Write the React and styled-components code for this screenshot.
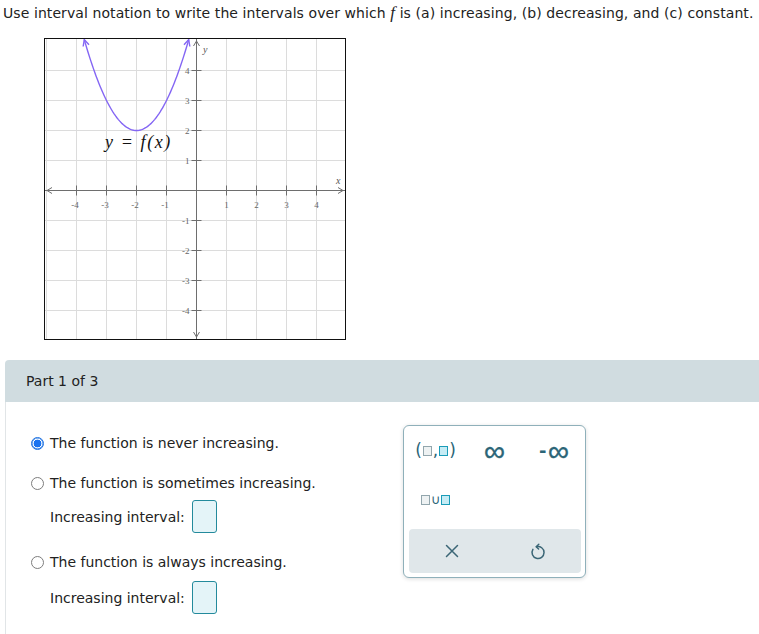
import React from "react"
import styled, { createGlobalStyle } from "styled-components"

const GlobalStyle = createGlobalStyle`
  body {
    margin: 0;
    background: #fff;
    font-family: "DejaVu Sans", Verdana, sans-serif;
    font-size: 14px;
    color: #222;
  }
`

// graph constants: 30px per unit, origin near the middle of a 300px box
const U = 30
const X0 = 151.5
const Y0 = 151.5
const px = (x) => X0 + x * U
const py = (y) => Y0 - y * U

const f = (x) => (x + 2) * (x + 2) + 2

const curvePoints = () => {
  const pts = []
  const a = -2 - Math.sqrt(3.03)
  const b = -2 + Math.sqrt(3.03)
  for (let i = 0; i <= 80; i++) {
    const x = a + ((b - a) * i) / 80
    pts.push([px(x), py(f(x))])
  }
  return pts
}

const arrowHead = (tip, from, size = 7) => {
  const dx = tip[0] - from[0]
  const dy = tip[1] - from[1]
  const len = Math.hypot(dx, dy)
  const ux = dx / len
  const uy = dy / len
  const a = 0.45
  const l = [tip[0] - size * (ux * Math.cos(a) - uy * Math.sin(a)), tip[1] - size * (uy * Math.cos(a) + ux * Math.sin(a))]
  const r = [tip[0] - size * (ux * Math.cos(-a) - uy * Math.sin(-a)), tip[1] - size * (uy * Math.cos(-a) + ux * Math.sin(-a))]
  return `M${l[0]} ${l[1]} L${tip[0]} ${tip[1]} L${r[0]} ${r[1]}`
}

const Graph = () => {
  const grid = [-5, -4, -3, -2, -1, 1, 2, 3, 4]
  const ticks = [-4, -3, -2, -1, 1, 2, 3, 4]
  const pts = curvePoints()
  const d = "M" + pts.map((p) => `${p[0].toFixed(2)} ${p[1].toFixed(2)}`).join(" L")
  return (
    <GraphBox width="300" height="300" viewBox="0 0 300 300">
      {grid.map((k) => (
        <line key={"v" + k} x1={px(k)} y1="0" x2={px(k)} y2="300" stroke="#dcdcdc" />
      ))}
      {grid.map((k) => (
        <line key={"h" + k} x1="0" y1={py(k)} x2="300" y2={py(k)} stroke="#dcdcdc" />
      ))}
      <line x1="0" y1={Y0} x2="300" y2={Y0} stroke="#6e6e6e" />
      <line x1={X0} y1="0" x2={X0} y2="300" stroke="#6e6e6e" />
      <path d={`M7 ${Y0 - 3} L2 ${Y0} L7 ${Y0 + 3}`} fill="none" stroke="#6e6e6e" />
      <path d={`M293 ${Y0 - 3} L298 ${Y0} L293 ${Y0 + 3}`} fill="none" stroke="#6e6e6e" />
      <path d={`M${X0 - 3} 7 L${X0} 2 L${X0 + 3} 7`} fill="none" stroke="#6e6e6e" />
      <path d={`M${X0 - 3} 293 L${X0} 298 L${X0 + 3} 293`} fill="none" stroke="#6e6e6e" />
      {ticks.map((k) => (
        <g key={"t" + k}>
          <line x1={px(k)} y1={Y0 - 5} x2={px(k)} y2={Y0 + 5} stroke="#6e6e6e" />
          <line x1={X0 - 5} y1={py(k)} x2={X0 + 5} y2={py(k)} stroke="#6e6e6e" />
          <TickText x={px(k) - (k < 0 ? 1.5 : 0)} y={Y0 + 17} textAnchor="middle">
            {k}
          </TickText>
          <TickText x={X0 - 7} y={py(k) + 3} textAnchor="end">
            {k}
          </TickText>
        </g>
      ))}
      <AxisText x="291" y="145">x</AxisText>
      <AxisText x="158" y="14">y</AxisText>
      <path d={d} fill="none" stroke="#8466f4" strokeWidth="1.4" />
      <path d={arrowHead(pts[0], pts[3])} fill="none" stroke="#8466f4" strokeWidth="1.4" />
      <path d={arrowHead(pts[pts.length - 1], pts[pts.length - 4])} fill="none" stroke="#8466f4" strokeWidth="1.4" />
      <FuncLabel x="60" y="109">
        y = f(x)
      </FuncLabel>
    </GraphBox>
  )
}

const Radio = ({ checked }) => <RadioDot $checked={checked} />

const Blank = ({ active }) => <Square $active={active} />

const XIcon = () => (
  <svg width="14" height="14" viewBox="0 0 14 14">
    <path d="M1.5 1.5 L12.5 12.5 M12.5 1.5 L1.5 12.5" stroke="#3b6676" strokeWidth="1.5" strokeLinecap="round" />
  </svg>
)

const UndoIcon = () => (
  <svg width="16" height="18" viewBox="0 0 16 18">
    <path d="M6.5 4.7 A6 6 0 1 1 2.9 7.4" fill="none" stroke="#3b6676" strokeWidth="1.5" strokeLinecap="round" />
    <path d="M8.8 2.2 L6.2 4.7 L8.6 7" fill="none" stroke="#3b6676" strokeWidth="1.5" strokeLinecap="round" strokeLinejoin="round" />
  </svg>
)

const App = () => {
  return (
    <Page>
      <GlobalStyle />
      <Question>
        Use interval notation to write the intervals over which <MathF>f</MathF> is (a) increasing, (b)
        decreasing, and (c) constant.
      </Question>
      <GraphWrap>
        <Graph />
      </GraphWrap>

      <Part>
        <PartHeader>Part 1 of 3</PartHeader>
        <PartBody>
          <Options>
            <Choice>
              <Radio checked />
              The function is never increasing.
            </Choice>
            <Choice $gap={20}>
              <Radio />
              The function is sometimes increasing.
            </Choice>
            <Interval $gap={7}>
              Increasing interval:
              <AnswerBox />
            </Interval>
            <Choice $gap={19}>
              <Radio />
              The function is always increasing.
            </Choice>
            <Interval $gap={9}>
              Increasing interval:
              <AnswerBox />
            </Interval>
          </Options>

          <Keypad>
            <KeyGrid>
              <Key>
                <Paren>(</Paren>
                <Blank />
                <Paren>,</Paren>
                <Blank active />
                <Paren>)</Paren>
              </Key>
              <Key>
                <Inf>∞</Inf>
              </Key>
              <Key>
                <Minus>-</Minus>
                <Inf>∞</Inf>
              </Key>
              <Key>
                <Blank />
                <Union>∪</Union>
                <Blank active />
              </Key>
            </KeyGrid>
            <ActionBar>
              <Action>
                <XIcon />
              </Action>
              <Action>
                <UndoIcon />
              </Action>
            </ActionBar>
          </Keypad>
        </PartBody>
      </Part>
    </Page>
  )
}

const Page = styled.div`
  width: 759px;
  min-height: 634px;
  overflow: hidden;
`

const Question = styled.p`
  margin: 0;
  padding: 4px 0 0 3px;
  line-height: 17px;
  white-space: nowrap;
  letter-spacing: 0.08px;
`

const MathF = styled.span`
  font-family: "Liberation Serif", "Times New Roman", serif;
  font-style: italic;
  font-size: 17px;
`

const GraphWrap = styled.div`
  margin: 16px 0 0 44px;
  height: 302px;
`

const GraphBox = styled.svg`
  display: block;
  border: 1px solid #111;
  background: #fff;
`

const TickText = styled.text`
  font-family: "Liberation Serif", "Times New Roman", serif;
  font-size: 9px;
  fill: #666;
`

const AxisText = styled.text`
  font-family: "Liberation Serif", "Times New Roman", serif;
  font-style: italic;
  font-size: 10px;
  fill: #555;
`

const FuncLabel = styled.text`
  font-family: "Liberation Serif", "Times New Roman", serif;
  font-style: italic;
  font-size: 18px;
  letter-spacing: 1.6px;
  fill: #111;
`

const Part = styled.section`
  margin: 20px 0 0 5px;
`

const PartHeader = styled.div`
  height: 42px;
  display: flex;
  align-items: center;
  padding-left: 21px;
  background: #d0dce0;
  border-radius: 4px 0 0 0;
  font-size: 14px;
  color: #222;
`

const PartBody = styled.div`
  display: flex;
  align-items: flex-start;
  border-left: 1px solid #e1e5e7;
  padding-left: 25px;
  min-height: 232px;
`

const Options = styled.div`
  width: 372px;
  padding-top: 31px;
  display: flex;
  flex-direction: column;
`

const Choice = styled.div`
  display: flex;
  align-items: center;
  gap: 6px;
  height: 20px;
  margin-top: ${(p) => p.$gap || 0}px;
  white-space: nowrap;
`

const RadioDot = styled.span`
  width: 13px;
  height: 13px;
  box-sizing: border-box;
  border-radius: 50%;
  flex: none;
  border: 1px solid ${(p) => (p.$checked ? "#1a6fe0" : "#7d7d7d")};
  background: ${(p) => (p.$checked ? "radial-gradient(circle, #1a73f0 0 3.6px, #fff 4.2px)" : "#fff")};
  box-shadow: ${(p) => (p.$checked ? "inset 0 0 0 0.5px #1a6fe0" : "none")};
`

const Interval = styled.div`
  display: flex;
  align-items: center;
  gap: 7px;
  margin: ${(p) => p.$gap}px 0 0 19px;
  height: 33px;
  white-space: nowrap;
`

const AnswerBox = styled.span`
  width: 25px;
  height: 33px;
  box-sizing: border-box;
  border: 1px solid #238a9c;
  border-radius: 3px;
  background: #e4f4f8;
`

const Keypad = styled.div`
  margin-top: 23px;
  width: 183px;
  height: 153px;
  box-sizing: border-box;
  border: 1px solid #8fb0ba;
  border-radius: 6px;
  box-shadow: 0 1px 4px rgba(0, 0, 0, 0.14);
  display: flex;
  flex-direction: column;
  padding: 0 4px 4px 5px;
  background: #fff;
`

const KeyGrid = styled.div`
  display: grid;
  grid-template-columns: repeat(3, 59px);
  grid-auto-rows: 49px;
  margin-left: -3px;
`

const Key = styled.div`
  display: flex;
  align-items: center;
  justify-content: center;
  color: #2b6577;
`

const Paren = styled.span`
  font-size: 17px;
  line-height: 1;
  margin: 0 1px;
`

const Square = styled.span`
  display: inline-block;
  width: 9px;
  height: 10px;
  box-sizing: border-box;
  border: 1.5px solid ${(p) => (p.$active ? "#1b9cb8" : "#92a6ad")};
  background: ${(p) => (p.$active ? "#c6ecf5" : "#eef2f3")};
`

const Inf = styled.span`
  display: inline-block;
  font-family: "Liberation Sans", Arial, sans-serif;
  font-size: 26px;
  line-height: 1;
  transform: scale(1.12);
  -webkit-text-stroke: 0.3px #2b6577;
`

const Minus = styled.span`
  font-size: 18px;
  font-weight: bold;
  line-height: 1;
  margin-right: 3px;
`

const Union = styled.span`
  font-size: 13px;
  line-height: 1;
  margin: 0 1px;
`

const ActionBar = styled.div`
  margin-top: 5px;
  height: 44px;
  border-radius: 4px;
  background: #e0e7ea;
  display: grid;
  grid-template-columns: 1fr 1fr;
`

const Action = styled.div`
  display: flex;
  align-items: center;
  justify-content: center;
`

export default App
